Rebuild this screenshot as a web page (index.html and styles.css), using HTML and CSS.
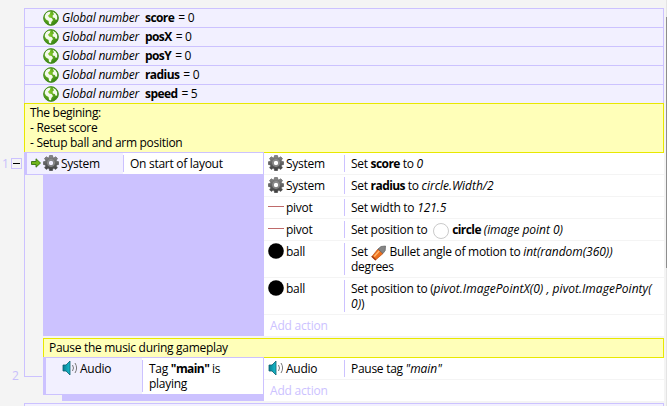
FILE: index.html
```
<!DOCTYPE html>
<html lang="en">
<head>
<meta charset="utf-8">
<title>Event sheet</title>
<link rel="stylesheet" href="styles.css">
</head>
<body>
<svg class="defs" width="0" height="0">
  <defs>
    <radialGradient id="gg" cx=".4" cy=".35" r=".7"><stop offset="0" stop-color="#86cc28"/><stop offset="1" stop-color="#2e7d10"/></radialGradient>
    <linearGradient id="mg" x1="0" y1="0" x2="0" y2="1"><stop offset="0" stop-color="#8a8a8a"/><stop offset="1" stop-color="#3c3c3c"/></linearGradient>
    <linearGradient id="ag" x1="0" y1="0" x2="1" y2="0"><stop offset="0" stop-color="#087f94"/><stop offset="1" stop-color="#18bccb"/></linearGradient>
  </defs>
  <symbol id="globe" viewBox="0 0 16 16">
    <circle cx="8" cy="8" r="7.5" fill="url(#gg)"/>
    <path d="M2.600 3.600 5 1.800 7.600 1.600 6.800 4 5 5.800 6.200 7.600 8.600 8 10 10 8.400 12 8 14.400 6 13.800 5.600 11 3 9.600 1.600 7Z" fill="#f4faec"/>
    <path d="M9.600 1.800 12.400 3.200 14.200 6 14.200 9.400 12.600 9.800 11.800 8 9.800 7.400 9.600 5.600 11 4.200Z" fill="#f4faec"/>
    <circle cx="8" cy="8" r="7.300" fill="none" stroke="#4b8f26" stroke-width="1"/>
  </symbol>
  <symbol id="gear" viewBox="0 0 16 16">
    <path fill="url(#mg)" stroke="#484848" stroke-width=".5" fill-rule="evenodd" d="M6.500.5h3l.4 2 1 .4 1.800-1.200 1.800 1.800-1.200 1.800.4 1 2 .4v2.800l-2 .4-.4 1 1.200 1.800-1.800 1.800-1.800-1.200-1 .4-.4 2h-3l-.4-2-1-.4-1.800 1.200-1.800-1.800 1.200-1.800-.4-1-2-.4V6.700l2-.4.4-1-1.200-1.800 1.800-1.800 1.800 1.200 1-.4ZM8 5.300a2.700 2.700 0 1 0 0 5.400 2.700 2.700 0 0 0 0-5.400Z"/>
    <circle cx="8" cy="8" r="3.500" fill="none" stroke="#999" stroke-width=".8"/>
  </symbol>
  <symbol id="line" viewBox="0 0 16 16"><path d="M0 7.500h16" stroke="#bf6a6a"/></symbol>
  <symbol id="ball" viewBox="0 0 16 16"><circle cx="8" cy="8" r="7.800"/></symbol>
  <symbol id="ring" viewBox="0 0 16 16"><circle cx="8" cy="8" r="7.500" fill="#fff" stroke="#bbb" stroke-width=".8"/></symbol>
  <symbol id="audio" viewBox="0 0 16 16">
    <path d="M1 5h3l4-4v14l-4-4H1Z" fill="url(#ag)" stroke="#0a6070" stroke-width=".8"/>
    <path d="M10.500 5q2 3 0 6M13 3q3.200 5 0 10" fill="none" stroke="#777"/>
  </symbol>
  <symbol id="bullet" viewBox="0 0 16 16">
    <path d="M1 11.500 7 4 12 8.500 4.500 15Z" fill="#ee6f1c" stroke="#b94a12" stroke-width=".7"/>
    <path d="M3.200 11.500 8.200 6" stroke="#ffb56c" stroke-width="1.500"/>
    <path d="M7 4 10 1.500l4.500-.5-.3 4.500-2.200 3Z" fill="#858585" stroke="#5e5e5e" stroke-width=".7"/>
    <path d="M.8 11.200 4.800 15" stroke="#a33c12" stroke-width="1.400"/>
  </symbol>
  <symbol id="arrow" viewBox="0 0 10 10"><path d="M.5 3.500h4.500V.8L9.500 5 5 9.200V6.500H.5Z" fill="#70b51b" stroke="#35700d" stroke-width=".9"/></symbol>
</svg>
<main class="sheet">
  <section class="gutter"></section>
  <section class="events">
    <div class="global"><svg class="icon"><use href="#globe"/></svg><i>Global number</i><b>score</b><span>= 0</span></div>
    <div class="global"><svg class="icon"><use href="#globe"/></svg><i>Global number</i><b>posX</b><span>= 0</span></div>
    <div class="global"><svg class="icon"><use href="#globe"/></svg><i>Global number</i><b>posY</b><span>= 0</span></div>
    <div class="global"><svg class="icon"><use href="#globe"/></svg><i>Global number</i><b>radius</b><span>= 0</span></div>
    <div class="global"><svg class="icon"><use href="#globe"/></svg><i>Global number</i><b>speed</b><span>= 5</span></div>
    <div class="note">The begining:<br>- Reset score<br>- Setup ball and arm position</div>
    <div class="event">
      <div class="conditions">
        <div class="marker"><span class="num">1</span><span class="toggle"></span></div>
        <div class="condition">
          <div class="object"><svg class="arrow"><use href="#arrow"/></svg><svg class="icon"><use href="#gear"/></svg>System</div>
          <div class="text">On start of layout</div>
        </div>
        <div class="fill"></div>
      </div>
      <div class="actions">
        <div class="action"><div class="object"><svg class="icon"><use href="#gear"/></svg>System</div><div class="text">Set <b>score</b> to <i>0</i></div></div>
        <div class="action"><div class="object"><svg class="icon"><use href="#gear"/></svg>System</div><div class="text">Set <b>radius</b> to <i>circle.Width/2</i></div></div>
        <div class="action"><div class="object"><svg class="icon"><use href="#line"/></svg>pivot</div><div class="text">Set width to <i>121.5</i></div></div>
        <div class="action"><div class="object"><svg class="icon"><use href="#line"/></svg>pivot</div><div class="text">Set position to <svg class="inline ring"><use href="#ring"/></svg><b>circle</b> <i>(image point 0)</i></div></div>
        <div class="action tall"><div class="object"><svg class="icon"><use href="#ball"/></svg>ball</div><div class="text">Set <svg class="inline"><use href="#bullet"/></svg> Bullet angle of motion to <i>int(random(360))</i><br>degrees</div></div>
        <div class="action tall"><div class="object"><svg class="icon"><use href="#ball"/></svg>ball</div><div class="text">Set position to (<i class="wide">pivot.ImagePointX(0) , pivot.ImagePointy(<br>0)</i>)</div></div>
        <div class="add">Add action</div>
      </div>
    </div>
    <div class="sub">
      <div class="branch"><span class="num">2</span></div>
      <div class="note single">Pause the music during gameplay</div>
      <div class="event">
        <div class="conditions">
          <div class="condition">
            <div class="object"><svg class="icon"><use href="#audio"/></svg>Audio</div>
            <div class="text">Tag <b>"main"</b> is<br>playing</div>
          </div>
          <div class="fill"></div>
        </div>
        <div class="actions">
          <div class="action"><div class="object"><svg class="icon"><use href="#audio"/></svg>Audio</div><div class="text">Pause tag <i>"main"</i></div></div>
          <div class="add">Add action</div>
        </div>
      </div>
    </div>
    <div class="global next"></div>
  </section>
  <aside class="scrollbar"><div class="thumb"></div></aside>
</main>
</body>
</html>
```
FILE: styles.css
```
* { box-sizing: border-box; }
body {
  margin: 0;
  width: 667px;
  height: 406px;
  overflow: hidden;
  background: #f4f4f4;
  color: #000;
  font: 12px/15px "Open Sans", "Noto Sans", sans-serif;
  letter-spacing: -0.28px;
  white-space: nowrap;
}
b { letter-spacing: -0.58px; }
i { letter-spacing: -0.04px; }
.wide { letter-spacing: 0.04px; }
.defs { position: absolute; }
.sheet { display: flex; height: 406px; }
.gutter { width: 24px; flex: none; }
.events { width: 640px; flex: none; padding-top: 8px; }
.icon { width: 16px; height: 16px; flex: none; }
.global {
  display: flex;
  height: 19px;
  padding: 1px 0 0 18px;
  border: 1px solid #ccc2ff;
  border-bottom: 0;
  background: #f2f0ff;
}
.global i { width: 82px; margin-left: 3px; letter-spacing: -0.2px; }
.global b { margin-right: 4px; padding-left: 1px; }
.note {
  height: 50px;
  padding: 1px 0 0 5px;
  border: 1px solid #e8e800;
  background: #ffffb9;
  letter-spacing: -0.3px;
}
.event { display: flex; }
.conditions { position: relative; width: 240px; flex: none; margin-top: -1px; }
.condition {
  display: flex;
  height: 23px;
  padding: 2px 0;
  border: solid #ccc2ff;
  border-width: 1px 1px 1px 3px;
  background: linear-gradient(90deg, #f2f0ff 96px, #fff 96px);
}
.conditions .object { padding-left: 4px; width: 97px; }
.object { display: flex; border-right: 1px solid #ccc2ff; line-height: 17px; }
.object .icon { margin-right: 2px; }
.arrow { width: 10px; height: 10px; margin: 3px 2px 0 0; }
.fill { margin-left: 19px; height: 161px; background: #ccc2ff; }
.actions { flex: 1; background: #fff; }
.action { display: flex; height: 22px; padding: 2px 0; border-bottom: 1px solid #f4f4f4; }
.action .object { width: 81px; padding-left: 4px; }
.tall { height: 37px; }
.text { padding: 1px 0 0 6px; }
.inline { width: 16px; height: 16px; margin: -3px 0 -2px; vertical-align: -3px; }
.ring { margin-left: 3px; margin-right: 3px; }
.add { height: 21px; padding: 3px 0 0 6px; color: #ccc2ff; letter-spacing: -0.2px; }
.num { width: 7px; color: #c8c0fb; }
.marker { position: absolute; left: -22px; top: 4px; display: flex; gap: 2px; }
.toggle { width: 11px; height: 11px; margin-top: 2px; border: 1px solid #ccc2ff; background: linear-gradient(#000, #000) center / 7px 1px no-repeat; }
.sub { position: relative; padding: 2px 0 1px 19px; }
.branch { position: absolute; left: 0; top: -161px; width: 18px; height: 202px; border: solid #ccc2ff; border-width: 0 0 1px 1px; }
.branch .num { position: absolute; left: -13px; bottom: -7px; }
.single { height: 20px; }
.sub .conditions { width: 221px; }
.sub .condition { height: 38px; }
.sub .conditions .object { padding-left: 16px; }
.sub .fill { height: 6px; }
.sub .event { height: 44px; }
.sub .actions { height: 43px; }
.next { height: 20px; }
.scrollbar { width: 1px; margin-left: 2px; padding-top: 17px; background: #e4e4e4; }
.thumb { height: 251px; background: #8d8d8d; }
```
